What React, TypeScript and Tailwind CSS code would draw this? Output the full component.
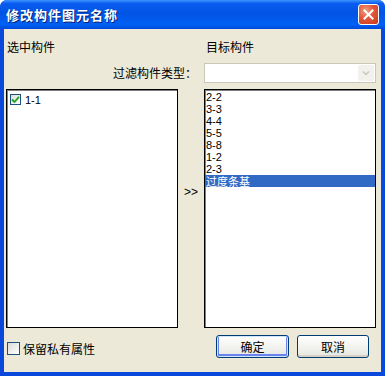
const font = { fontFamily: '"Noto Sans CJK SC", "DejaVu Sans", sans-serif' };
const listFont = { fontFamily: '"Liberation Sans", "Noto Sans CJK SC", sans-serif' };

const targets = ["2-2", "3-3", "4-4", "5-5", "8-8", "1-2", "2-3"];

function CheckBox({ checked, size }: { checked?: boolean; size: number }) {
  return (
    <span
      className="inline-flex shrink-0 items-center justify-center border border-[#1C5180] bg-gradient-to-br from-[#DCDCD7] to-white"
      style={{ width: size, height: size }}
    >
      {checked ? (
        <svg width="9" height="9" viewBox="0 0 9 9">
          <path d="M1 4.5 L3.5 7 L8 1.8" fill="none" stroke="#21A121" strokeWidth="1.8" />
        </svg>
      ) : null}
    </span>
  );
}

function XpButton({ label, isDefault }: { label: string; isDefault?: boolean }) {
  return (
    <button
      type="button"
      className={`flex h-[23px] items-center justify-center rounded-[3px] border border-[#003C74] bg-gradient-to-b from-white to-[#E6E6E0] text-[12px] text-black ${
        isDefault ? "shadow-[inset_0_0_0_1px_#CEE7FF,inset_0_-1px_0_2px_#6982EE]" : "shadow-[inset_0_-2px_0_#D6D0C5]"
      }`}
      style={font}
    >
      {label}
    </button>
  );
}

export default function App() {
  return (
    <div
      className="flex h-[376px] w-[385px] flex-col overflow-hidden rounded-t-[7px] bg-[#0A48DC] text-[12px] leading-[12px] text-black"
      style={font}
    >
      <div className="flex h-[29px] shrink-0 items-center justify-between bg-[linear-gradient(to_bottom,#3C95FF_0%,#0A5CF0_12%,#0054E3_45%,#0060F5_85%,#0048D8_100%)] pl-[6px] pr-[6px]">
        <span className="text-[13px] font-bold tracking-[1px] text-white [text-shadow:1px_1px_0_#0A1E6E]">
          修改构件图元名称
        </span>
        <span className="flex h-[21px] w-[21px] items-center justify-center rounded-[3px] border border-white bg-[radial-gradient(circle_at_35%_30%,#F0A080_0%,#E2553A_45%,#C43A1C_100%)]">
          <svg width="11" height="11" viewBox="0 0 11 11">
            <path d="M1.5 1.5 L9.5 9.5 M9.5 1.5 L1.5 9.5" stroke="white" strokeWidth="2" strokeLinecap="square" />
          </svg>
        </span>
      </div>

      <div className="mx-[4px] mb-[4px] flex flex-1 flex-col bg-[#ECE9D8] pl-[2px] pt-[10px]">
        <div className="grid grid-cols-[172px_26px_172px]">
          <div className="flex h-[16px] items-center pl-[1px]">选中构件</div>
          <div />
          <div className="flex h-[16px] items-center pl-[2px]">目标构件</div>

          <div className="col-span-2 mt-[8px] flex h-[20px] items-center justify-end pr-[7px]">过滤构件类型：</div>
          <div className="mt-[8px] flex h-[20px] items-stretch border border-[#C9C7BA] bg-white p-[1px]">
            <div className="flex-1" />
            <div className="flex w-[16px] items-center justify-center rounded-[2px] bg-[#F3F1EC]">
              <svg width="8" height="6" viewBox="0 0 8 6">
                <path d="M1 1.5 L4 4.5 L7 1.5" fill="none" stroke="#C9C7BA" strokeWidth="1.5" />
              </svg>
            </div>
          </div>

          <div className="mt-[6px] h-[239px] border border-black bg-white pl-[2px] pt-[2px] shadow-[inset_1px_1px_0_#808080]">
            <div className="flex h-[12px] items-center gap-[4px] pl-[1px] pt-[3px]">
              <CheckBox checked size={11} />
              <span className="text-[11px] leading-[12px]" style={listFont}>1-1</span>
            </div>
          </div>
          <div className="mt-[6px] flex justify-center pt-[97px] text-[12px] leading-[12px]" style={listFont}>
            &gt;&gt;
          </div>
          <div className="mt-[6px] h-[239px] border border-black bg-white pt-[1px] text-[11px] shadow-[inset_1px_1px_0_#808080]" style={listFont}>
            {targets.map((t) => (
              <div key={t} className="h-[12px] overflow-hidden pl-[1px] leading-[12px]">
                {t}
              </div>
            ))}
            <div className="flex h-[12px] items-center bg-[#316AC5] pl-[1px] text-[11px] leading-[11px] text-white" style={font}>
              过度条基
            </div>
          </div>
        </div>

        <div className="mt-[7px] flex items-start">
          <div className="mt-[7px] flex w-[210px] items-center gap-[3px] pl-[1px]">
            <CheckBox size={13} />
            <span className="text-[12px] leading-[13px]">保留私有属性</span>
          </div>
          <div className="grid grid-cols-[73px_72px] gap-[8px]">
            <XpButton label="确定" isDefault />
            <XpButton label="取消" />
          </div>
        </div>
      </div>
    </div>
  );
}
